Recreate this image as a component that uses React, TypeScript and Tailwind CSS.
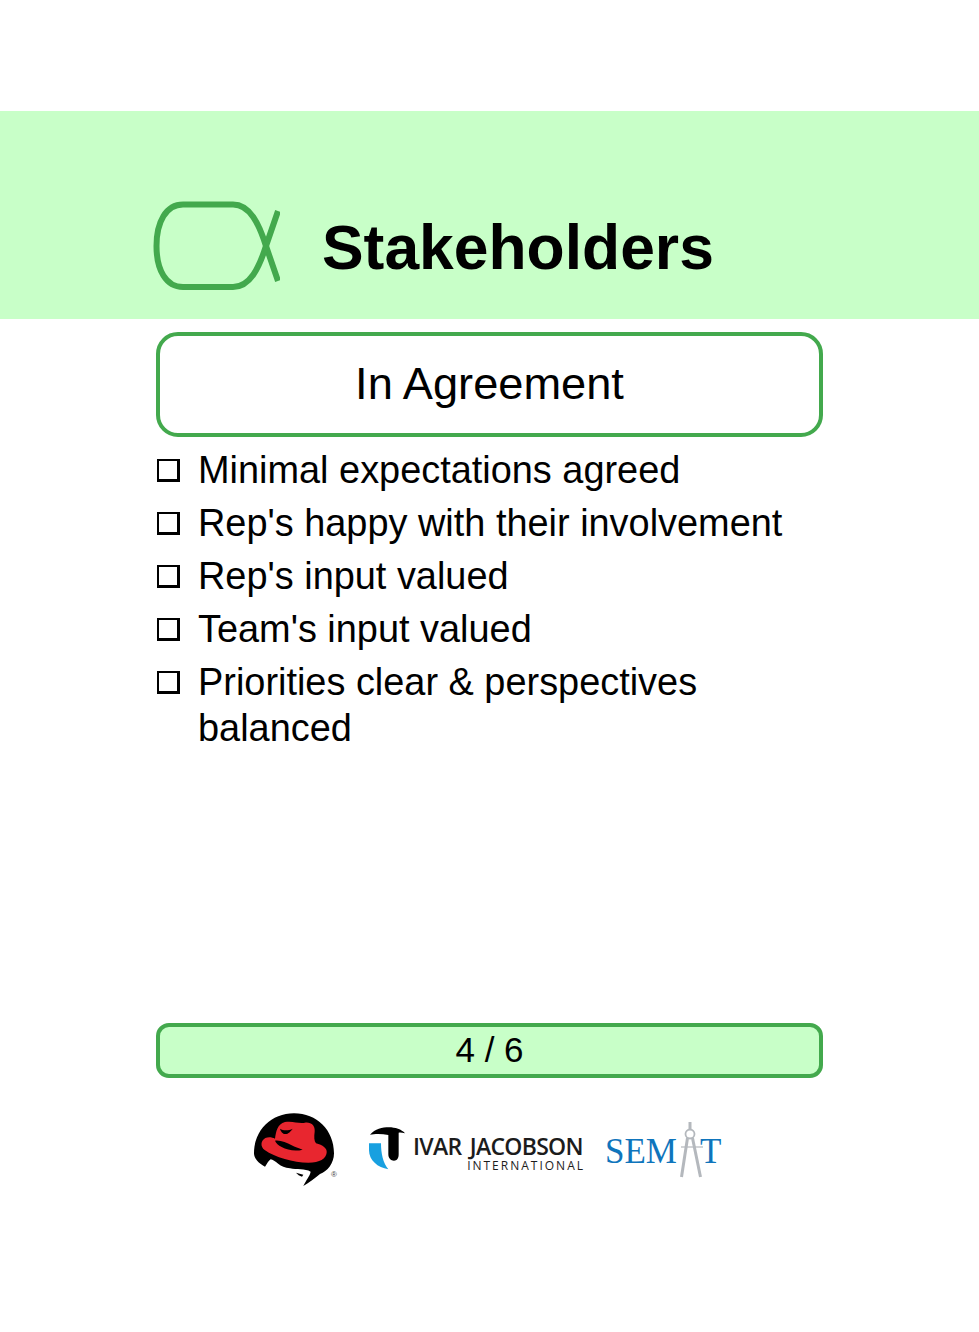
const items = [
  "Minimal expectations agreed",
  "Rep's happy with their involvement",
  "Rep's input valued",
  "Team's input valued",
  "Priorities clear & perspectives balanced",
];

const AlphaIcon = () => (
  <svg width="130" height="90" viewBox="150 200 130 90" fill="none" stroke="#43a94d" strokeWidth="6">
    <path d="M183 204.500 H233 C250 204.500 259 224 266 246 L278 281" />
    <path d="M183 287 H233 C250 287 259 268 266 246 L278 211" />
    <path d="M183 204.500 C166 204.500 156.500 222 156.500 246 C156.500 270 166 287 183 287" />
  </svg>
);

const RedHatLogo = () => (
  <svg width="110" height="95" viewBox="0 0 330 285">
    <path
      fill="#000"
      d="M42 160 C42 90 95 40 162 40 C230 40 282 90 282 160 C282 190 262 215 240 222 C225 235 205 250 190 258 C198 240 210 228 212 215 C195 205 170 210 150 205 C120 205 105 178 92 178 C82 185 80 195 75 200 C55 190 42 175 42 160 Z"
    />
    <path
      fill="#e8262f"
      d="M105 116 C108 95 112 72 135 66 C160 62 175 72 195 68 C215 66 226 78 224 95 C222 110 222 122 228 130 C248 135 262 145 260 158 C258 175 240 188 205 188 C160 188 105 172 74 150 C60 140 62 122 76 114 C85 110 96 111 105 116 Z"
    />
    <path fill="#000" d="M105 122 C122 120 140 128 155 136 C165 141 175 145 188 149 C165 155 142 150 125 141 C115 135 108 130 105 122 Z" />
    <path fill="#000" d="M120 86 C130 92 145 92 158 86 C152 94 146 102 136 102 C128 102 122 94 120 86 Z" />
    <path fill="#000" d="M168 218 L190 224 L186 230 L176 226 Z" />
    <text x="273" y="230" fontSize="24" fill="#444" fontFamily="Liberation Sans, sans-serif">®</text>
  </svg>
);

const IvarMark = () => (
  <svg width="38" height="46" viewBox="0 0 114 138">
    <path fill="#000" d="M3 23 C18 6 40 1 60 1 C78 1 98 7 108 19 C100 17 94 16 89 17 L89 82 C89 94 84 101 75 101 C66 101 58 94 58 82 L58 24 C40 20 18 20 3 23 Z" />
    <path fill="#18a0e0" d="M0 49 L36 49 C36 80 42 108 58 127 C26 122 0 100 0 70 Z" />
  </svg>
);

const Compass = () => (
  <svg className="absolute left-[69px] top-[2px]" width="46" height="60" viewBox="0 0 46 60" fill="none" stroke="#b4b8bd">
    <path d="M16 0 V8" strokeWidth="3" />
    <circle cx="16" cy="12" r="4.500" strokeWidth="1.800" />
    <path d="M13.500 16 L7.500 55" strokeWidth="3" />
    <path d="M18.500 16 L26.500 55" strokeWidth="3" />
    <path d="M7 25 H29" strokeWidth="1.200" />
  </svg>
);

export default function App() {
  return (
    <div className="min-h-[1332px] bg-white pt-[111px] font-['Liberation_Sans',Arial,sans-serif] text-black">
      <header className="flex h-[208px] items-end gap-[42px] bg-[#c8ffc8] pb-[29px] pl-[150px]">
        <AlphaIcon />
        <h1 className="mb-[6px] text-[62.400px] font-bold leading-[72px]">Stakeholders</h1>
      </header>

      <main className="mx-auto w-[667px]">
        <div className="mt-[13px] flex h-[105px] items-center justify-center rounded-[22px] border-[4px] border-[#43a94d] pb-[2px] text-[45.200px]">
          In Agreement
        </div>

        <ul className="mt-[10px] flex h-[576px] flex-col gap-[7px] pr-[20px] text-[37.900px] leading-[46px]">
          {items.map((item) => (
            <li key={item} className="flex items-start">
              <span className="ml-[1px] mt-[12px] h-[23px] w-[23px] shrink-0 border-2 border-b-[3px] border-r-[3px] border-black" />
              <span className="ml-[18px]">{item}</span>
            </li>
          ))}
        </ul>

        <div className="flex h-[55px] items-center justify-center rounded-[13px] border-[4px] border-[#43a94d] bg-[#c8ffc8] text-[35px]">
          4 / 6
        </div>

        <footer className="mt-[22px] flex items-start">
          <div className="ml-[84px]">
            <RedHatLogo />
          </div>
          <div className="ml-[19px] mt-[27px]">
            <IvarMark />
          </div>
          <div className="ml-[6px] mt-[33px] w-[172px] font-['Open_Sans',sans-serif] text-[#1c1c1c]">
            <div className="text-[23px] font-semibold leading-[26px] tracking-[-0.700px] [word-spacing:3px] whitespace-nowrap">IVAR JACOBSON</div>
            <div className="text-right text-[12px] leading-[13px] tracking-[2px] whitespace-nowrap">INTERNATIONAL</div>
          </div>
          <div className="relative ml-[20px] mt-[20px] flex h-[60px] w-[120px] items-start pt-[12px] font-['Liberation_Serif',serif] text-[35px] leading-[40px] text-[#0f75bc]">
            <span>SEM</span>
            <span className="ml-[23px]">T</span>
            <Compass />
          </div>
        </footer>
      </main>
    </div>
  );
}
